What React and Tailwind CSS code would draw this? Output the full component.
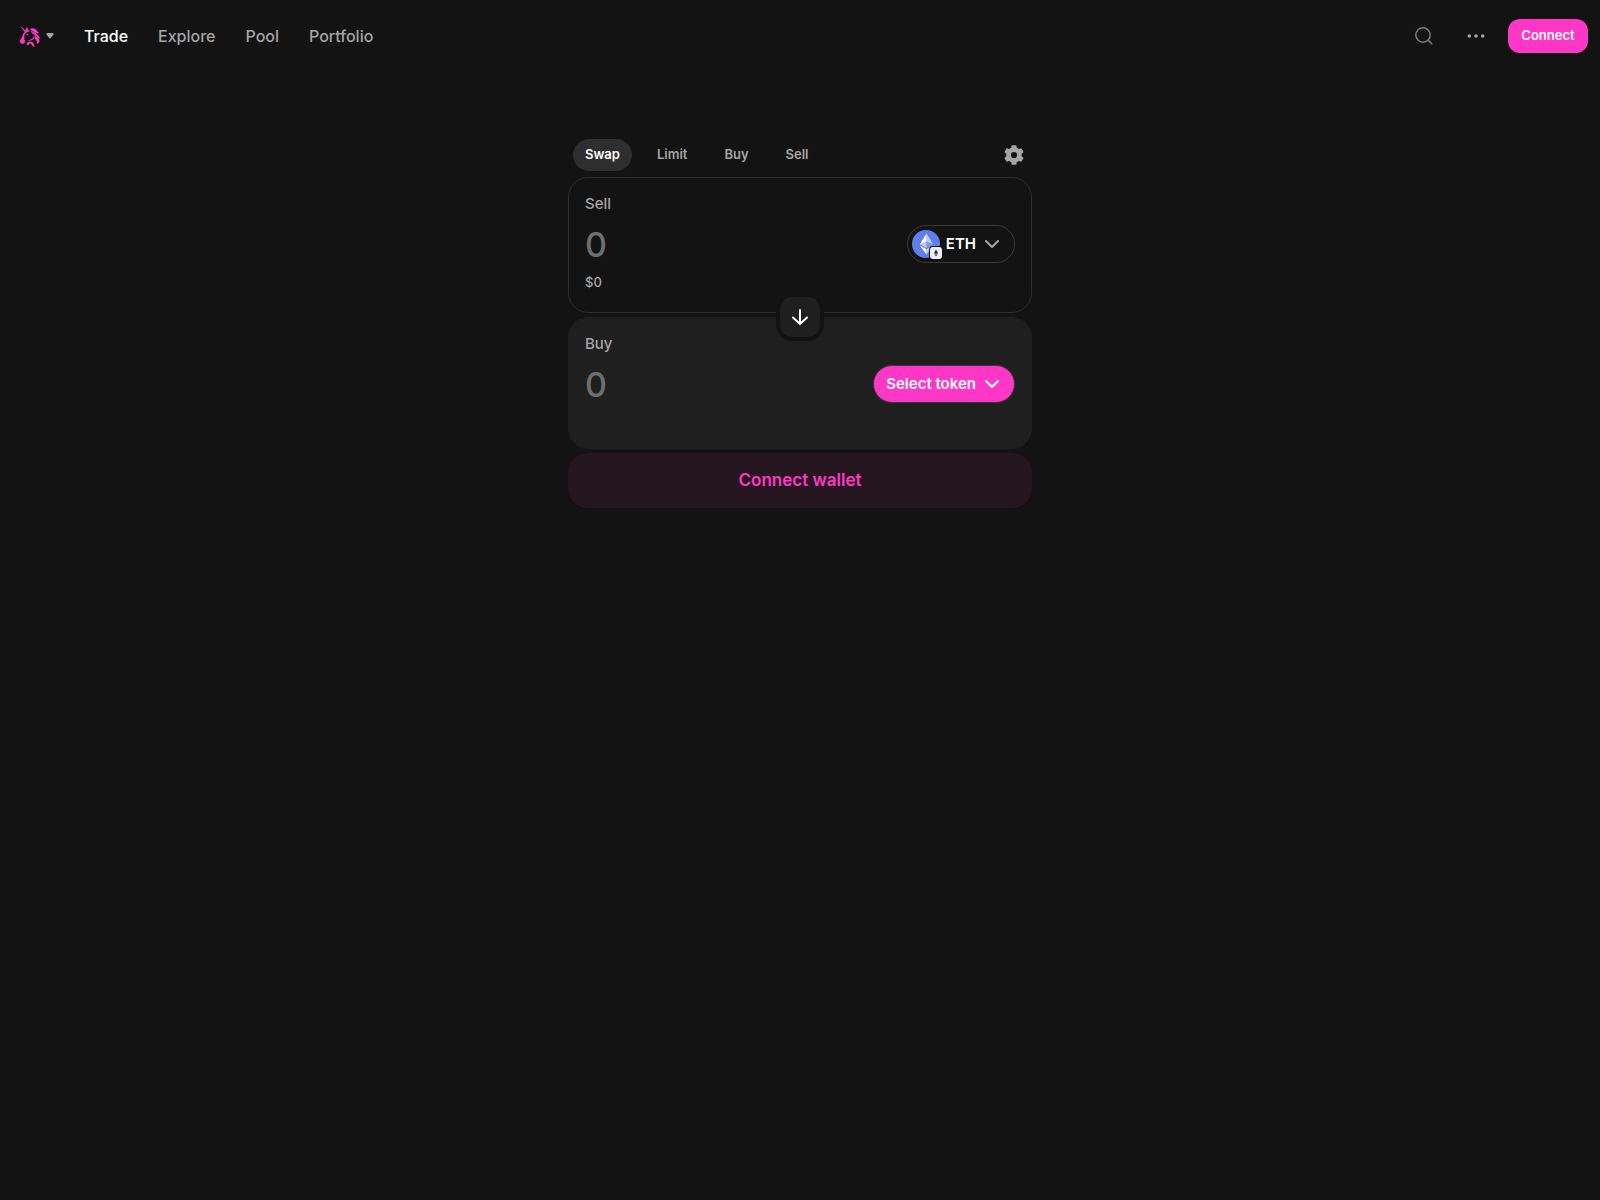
import React, { useState } from 'react'

const NAV_LINKS = ['Trade', 'Explore', 'Pool', 'Portfolio']
const TABS = ['Swap', 'Limit', 'Buy', 'Sell']

function UnicornLogo() {
  return (
    <svg viewBox="0 0 60 63" className="h-[21px] w-5 fill-[#ff37c7]" aria-hidden="true">
      {/* horn and ears */}
      <path d="M0 0 19 15 15 19Z" />
      <path d="M17 18 C16 11 18 6 22 3 C22 9 24 12 28 14 L24 19 C22 18 19 19 17 18Z" />
      {/* face */}
      <path d="M19 15 C12 18 8 24 7 31 C6 36 0 40 0 46 C0 52 4 54 9 53 C13 52 15 49 16 44 C13 42 12 40 13 36 C14 32 12 28 15 24 C17 21 19 19 22 19Z" />
      <path d="M19 25 C22 23 25 24 26 27 C24 29 21 28 19 25Z" />
      <path d="M22 42 C27 43 31 41 35 38 C39 36 41 34 41 30 C44 35 41 41 35 43 C31 45 26 45 22 42Z" />
      {/* mane */}
      <path d="M30 9 C36 4 45 7 49 12 C53 16 54 20 58 21 C52 24 46 20 41 17 C36 15 32 13 30 9Z" />
      <path d="M32 15 C41 18 49 22 53 26 C58 30 59 34 60 40 C55 37 52 33 47 29 C41 25 36 23 32 15Z" />
      <path d="M43 28 C50 33 57 37 58 43 C59 49 56 53 51 55 C53 47 49 44 46 40 C44 36 43 32 43 28Z" />
      {/* beard */}
      <path d="M20 51 C27 46 36 46 40 51 C43 55 42 59 45 62 C39 62 36 59 35 55 C30 50 25 54 26 58 C22 57 19 55 20 51Z" />
    </svg>
  )
}

function GearIcon() {
  return (
    <svg viewBox="0 0 20 20" className="size-5 fill-current" aria-hidden="true">
      <circle cx="10" cy="10" r="5.4" fill="none" stroke="currentColor" strokeWidth="4.6" />
      {[0, 60, 120, 180, 240, 300].map((deg) => (
        <rect key={deg} x="7.4" y="0.2" width="5.2" height="4.4" rx="1.2" transform={`rotate(${deg} 10 10)`} />
      ))}
    </svg>
  )
}

function Chevron({ className }) {
  return (
    <svg viewBox="0 0 20 20" fill="none" className={`size-5 ${className}`} aria-hidden="true">
      <path d="M4 7 10 13 16 7" stroke="currentColor" strokeWidth="2" strokeLinecap="round" strokeLinejoin="round" />
    </svg>
  )
}

function EthIcon() {
  return (
    <span className="relative size-7">
      <svg viewBox="0 0 32 32" className="size-7" aria-hidden="true">
        <circle cx="16" cy="16" r="16" fill="#627eea" />
        <g fill="#fff">
          <path fillOpacity=".6" d="M16.5 4v8.87l7.5 3.35z" />
          <path d="M16.5 4 9 16.22l7.5-3.35z" />
          <path fillOpacity=".6" d="M16.5 21.97V28L24 17.62z" />
          <path d="M16.5 28v-6.03L9 17.62z" />
          <path fillOpacity=".2" d="m16.5 20.57 7.5-4.35-7.5-3.35z" />
          <path fillOpacity=".6" d="m9 16.22 7.5 4.35v-7.7z" />
        </g>
      </svg>
      {/* network badge */}
      <svg viewBox="0 0 14 14" className="absolute -right-[3px] -bottom-[2px] size-3.5" aria-hidden="true">
        <rect width="14" height="14" rx="4" fill="#131313" />
        <rect x="1" y="1" width="12" height="12" rx="3" fill="#eceff8" />
        <path d="M7 3.5 9 7 7 8.2 5 7Z" fill="#333" />
        <path d="M5 7.6 7 8.8 9 7.6 7 10.6Z" fill="#444" />
      </svg>
    </span>
  )
}

function AmountInput({ label, value, onChange }) {
  return (
    <input
      type="text"
      inputMode="decimal"
      placeholder="0"
      aria-label={label}
      value={value}
      onChange={(e) => onChange(e.target.value)}
      className="h-11 min-w-0 flex-1 bg-transparent text-[34px] font-medium text-white outline-none placeholder:text-[#6f6f6f]"
    />
  )
}

function Header() {
  return (
    <header className="flex h-18 items-center justify-between pr-3 pl-5">
      <div className="flex items-center">
        <button type="button" aria-label="Uniswap menu" className="flex items-center gap-1.5">
          <UnicornLogo />
          <svg viewBox="0 0 8 6" className="h-1.5 w-2 fill-[#a6a6a6]" aria-hidden="true">
            <path d="M1.4 0h5.2c.8 0 1.2.8.8 1.4L4.8 5c-.4.5-1.2.5-1.6 0L.6 1.4C.2.8.6 0 1.4 0Z" />
          </svg>
        </button>
        <nav className="ml-[30px] flex gap-[30px] text-base font-medium">
          {NAV_LINKS.map((name) => (
            <a key={name} href="#" className={name === 'Trade' ? 'text-white' : 'text-[#a6a6a6]'}>
              {name}
            </a>
          ))}
        </nav>
      </div>

      <div className="flex items-center">
        <button type="button" aria-label="Search" className="mr-8 text-[#7d7d7d]">
          <svg viewBox="0 0 20 20" fill="none" className="size-5" aria-hidden="true">
            <circle cx="9" cy="9" r="7.2" stroke="currentColor" strokeWidth="1.5" />
            <path d="m14.2 14.2 3.6 3.6" stroke="currentColor" strokeWidth="1.5" strokeLinecap="round" />
          </svg>
        </button>
        <button type="button" aria-label="More" className="mr-[22px] text-[#a6a6a6]">
          <svg viewBox="0 0 20 20" className="size-5 fill-current" aria-hidden="true">
            <circle cx="3.3" cy="10" r="1.8" />
            <circle cx="10" cy="10" r="1.8" />
            <circle cx="16.7" cy="10" r="1.8" />
          </svg>
        </button>
        <button type="button" className="h-[34px] w-20 rounded-xl bg-[#ff37c7] text-[13px] font-semibold text-white">
          Connect
        </button>
      </div>
    </header>
  )
}

export default function App() {
  const [tab, setTab] = useState('Swap')
  const [sellAmount, setSellAmount] = useState('')
  const [buyAmount, setBuyAmount] = useState('')

  return (
    <div className="min-h-dvh bg-[#131313] font-['Inter',sans-serif]">
      <Header />

      <main className="mx-auto w-full max-w-[480px] px-2 pt-[67px]">
        {/* Tabs */}
        <div className="mb-1.5 flex items-center justify-between pr-2 pl-[5px]">
          <div className="flex gap-[13px]">
            {TABS.map((name) => (
              <button
                key={name}
                type="button"
                onClick={() => setTab(name)}
                className={`h-8 rounded-full px-3 text-[13px] font-semibold ${tab === name ? 'bg-[#2e2e2e] text-white' : 'text-[#a6a6a6]'}`}
              >
                {name}
              </button>
            ))}
          </div>
          <button type="button" aria-label="Settings" className="text-[#a6a6a6]">
            <GearIcon />
          </button>
        </div>

        {/* Sell */}
        <section className="rounded-[20px] border border-[#2e2e2e] px-4 pt-4 pb-5">
          <h2 className="text-[15px]/5 font-medium text-[#a6a6a6]">Sell</h2>
          <div className="mt-2 flex items-center justify-between">
            <AmountInput label="Sell amount" value={sellAmount} onChange={setSellAmount} />
            <button
              type="button"
              className="flex h-[38px] items-center rounded-full border border-[#393939] pr-3 pl-1 text-[15px] font-semibold text-white"
            >
              <EthIcon />
              <span className="mr-1.5 ml-1.5">ETH</span>
              <Chevron className="text-[#a6a6a6]" />
            </button>
          </div>
          <p className="mt-1.5 text-[13px]/5 font-medium text-[#a6a6a6]">$0</p>
        </section>

        {/* Switch direction */}
        <div className="relative h-1">
          <button
            type="button"
            aria-label="Switch tokens"
            className="absolute -top-5 left-1/2 flex size-12 -translate-x-1/2 items-center justify-center rounded-2xl border-4 border-[#131313] bg-[#1f1f1f] text-white"
          >
            <svg viewBox="0 0 24 24" fill="none" className="size-6" aria-hidden="true">
              <path d="M12 5v14M5 12.5 12 19l7-6.5" stroke="currentColor" strokeWidth="2" strokeLinecap="round" strokeLinejoin="round" />
            </svg>
          </button>
        </div>

        {/* Buy */}
        <section className="rounded-[20px] border border-[#1f1f1f] bg-[#1f1f1f] p-4">
          <h2 className="text-[15px]/5 font-medium text-[#a6a6a6]">Buy</h2>
          <div className="mt-2 flex items-center justify-between">
            <AmountInput label="Buy amount" value={buyAmount} onChange={setBuyAmount} />
            <button
              type="button"
              className="flex h-[38px] items-center rounded-full border border-[#393939] bg-[#ff37c7] px-3 text-[15px] font-semibold text-white"
            >
              <span className="mr-1.5">Select token</span>
              <Chevron className="text-white" />
            </button>
          </div>
          <div className="mt-1.5 h-5" />
        </section>

        <button
          type="button"
          className="mt-1 h-[55px] w-full rounded-[20px] bg-[#261620] text-[17px] font-semibold text-[#ff37c7]"
        >
          Connect wallet
        </button>
      </main>
    </div>
  )
}
